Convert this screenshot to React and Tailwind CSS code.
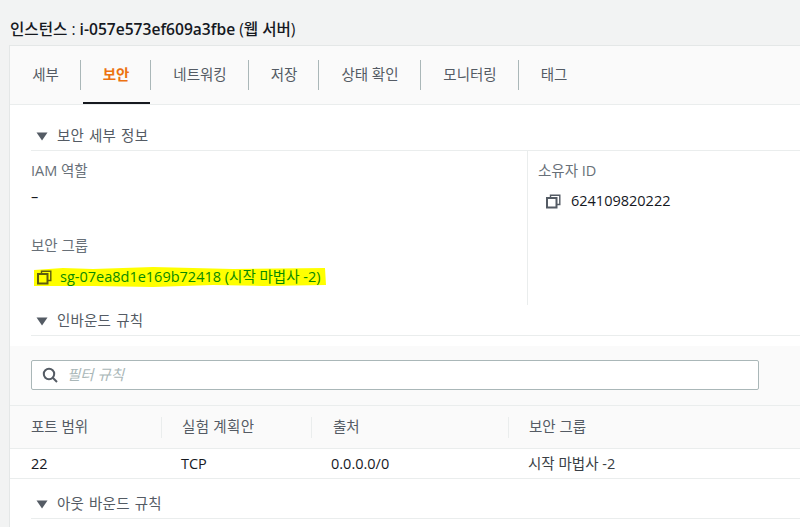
const font = { fontFamily: '"Open Sans","Noto Sans CJK KR",sans-serif' };

function Copy({ color = "#545b64" }) {
  return (
    <svg width="15" height="15" viewBox="0 0 15 15" fill="none" stroke={color} strokeWidth="2" className="shrink-0">
      <rect x="1" y="4" width="9.5" height="9.5" />
      <path d="M4.5 4V1.2H13.8V10.5H10.5" strokeWidth="1.4" />
    </svg>
  );
}

function Section({ title }) {
  return (
    <div className="ml-[21px] h-[31px] pt-[2px] flex items-center gap-[9px] border-b border-[#eaeded] text-[14.5px] text-[#545b64]">
      <svg width="12" height="9" viewBox="0 0 12 9" className="ml-[5px]"><path d="M0.5 0.5H11.5L6 8.5Z" fill="#545b64" /></svg>
      <span className="tracking-[0.2px] [word-spacing:1px]">{title}</span>
    </div>
  );
}

const tabs = [
  ["세부", "w-[71px]"],
  ["보안", "w-[70px]"],
  ["네트워킹", "w-[98px]"],
  ["저장", "w-[70px]"],
  ["상태 확인", "w-[102px]"],
  ["모니터링", "w-[98px]"],
  ["태그", "w-[70px]"],
];

export default function App() {
  return (
    <div style={font} className="w-[800px] h-[527px] overflow-hidden bg-[#f2f3f3] flex flex-col">
      <div className="h-[45px] shrink-0 pl-[10px] pt-[19px] text-[15.6px] leading-[20px] font-medium text-[#16191f] whitespace-nowrap">
        인스턴스 : <span className="font-semibold">i-057e573ef609a3fbe</span> (웹 서버)
      </div>
      <div className="ml-[9px] flex-1 bg-white border-l border-t border-[#e4e7e7] flex flex-col">
        <div className="h-[59px] shrink-0 bg-[#fafafa] border-b border-[#eaeded] flex pt-[14px]">
          {tabs.map(([t, w], i) => (
            <div key={t} className={`${w} h-[44px] relative flex justify-center text-[14.5px] ${i === 1 ? "text-[#ec7211] font-semibold" : "text-[#545b64]"}`}>
              <span className="pt-[5px] leading-[20px]">{t}</span>
              {i < 6 && <span className="absolute right-0 top-0 h-[30px] w-px bg-[#aab7b8]" />}
              {i === 1 && <span className="absolute left-[2px] right-[1px] bottom-0 h-[2px] bg-[#16191f]" />}
            </div>
          ))}
        </div>

        <div className="h-[15px] shrink-0" />
        <Section title="보안 세부 정보" />

        <div className="h-[154px] shrink-0 flex text-[14.5px]">
          <div className="w-[518px] border-r border-[#eaeded] pl-[21px]">
            <div className="pt-[10px] leading-[20px] text-[#687078]">IAM 역할</div>
            <div className="pt-[6px] leading-[20px] text-[#16191f]">–</div>
            <div className="pt-[29px] leading-[20px] text-[#687078]">보안 그룹</div>
            <div className="relative mt-[11px] flex items-center gap-[8px] pl-[6px] h-[20px]">
              <svg className="absolute left-[2px] top-[-1px]" width="294" height="22" viewBox="0 0 294 22">
                <path d="M1 4 L30 2 L60 3 L120 1 L200 3 L292 2 L293 19 L230 20 L180 19 L120 21 L60 20 L1 20 Z" fill="#ffff00" />
              </svg>
              <span className="relative"><Copy color="#5c5c10" /></span>
              <span className="relative text-[14.5px] text-[#0a8a00] whitespace-nowrap">sg-07ea8d1e169b72418 (시작 마법사 -2)</span>
            </div>
          </div>
          <div className="flex-1 pl-[10px]">
            <div className="pt-[10px] leading-[20px] text-[#687078]">소유자 ID</div>
            <div className="mt-[10px] pl-[8px] flex items-center gap-[10px] h-[20px] text-[#16191f]">
              <Copy />
              <span>624109820222</span>
            </div>
          </div>
        </div>

        <Section title="인바운드 규칙" />

        <div className="h-[10px] shrink-0" />
        <div className="h-[60px] shrink-0 bg-[#fafafa] border-b border-[#eaeded] pl-[21px] pt-[14px]">
          <div className="w-[728px] h-[30px] bg-white border border-[#aab7b8] rounded-[2px] flex items-center pl-[10px] gap-[9px]">
            <svg width="16" height="16" viewBox="0 0 16 16" fill="none" stroke="#545b64" strokeWidth="2">
              <circle cx="7" cy="7" r="5.2" />
              <path d="M11 11L15 15" />
            </svg>
            <span className="italic text-[14.5px] text-[#aab7b8]">필터 규칙</span>
          </div>
        </div>

        <div className="h-[43px] shrink-0 bg-[#fafafa] border-b border-[#eaeded] flex items-center text-[14.5px] text-[#545b64]">
          <div className="w-[152px] pl-[21px] h-[21px] border-r border-[#eaeded] leading-[20px]">포트 범위</div>
          <div className="w-[150px] pl-[20px] h-[21px] border-r border-[#eaeded] leading-[20px] tracking-[0.3px]">실험 계획안</div>
          <div className="w-[197px] pl-[21px] h-[21px] border-r border-[#eaeded] leading-[20px]">출처</div>
          <div className="pl-[20px] leading-[20px]">보안 그룹</div>
        </div>

        <div className="h-[30px] shrink-0 border-b border-[#eaeded] flex items-center text-[14.5px] text-[#16191f]">
          <div className="w-[152px] pl-[21px]">22</div>
          <div className="w-[150px] pl-[19px]">TCP</div>
          <div className="w-[197px] pl-[19px]">0.0.0.0/0</div>
          <div className="pl-[19px] text-[#3a3f45]">시작 마법사 -2</div>
        </div>

        <div className="h-[9px] shrink-0" />
        <Section title="아웃 바운드 규칙" />
      </div>
    </div>
  );
}
